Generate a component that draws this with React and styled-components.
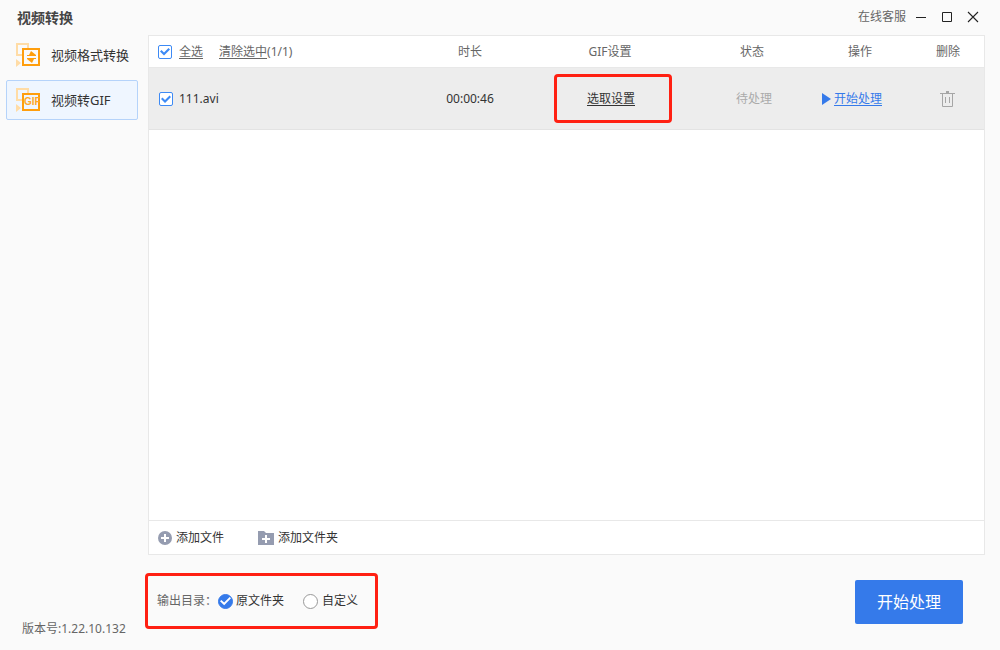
import React, { useState } from 'react'
import styled, { createGlobalStyle } from 'styled-components'

const GlobalStyle = createGlobalStyle`
    * {
        box-sizing: border-box;
    }

    body {
        margin: 0;
        background: #fafafa;
        color: #333;
        font: 12px/16px "Noto Sans", "Noto Sans CJK SC", sans-serif;
    }

    button, input {
        font: inherit;
        color: inherit;
        margin: 0;
    }

    svg {
        flex: none;
    }
`

const Window = styled.div`
    display: flex;
    flex-direction: column;
    min-height: 100vh;
`

const TitleBar = styled.header`
    display: flex;
    align-items: center;
    justify-content: space-between;
    height: 35px;
    padding: 0 17px;
`

const Title = styled.h1`
    margin: 0;
    font-size: 14px;
    line-height: 20px;
    font-weight: 700;
    color: #444;
`

const WindowControls = styled.div`
    display: flex;
    align-items: center;
    gap: 6px;
    height: 34px;
    margin-bottom: 1px;
`

const PlainButton = styled.button`
    display: inline-flex;
    align-items: center;
    padding: 0;
    border: none;
    background: none;
    vertical-align: middle;
    cursor: pointer;
`

const WindowButton = styled(PlainButton)`
    justify-content: center;
    width: 20px;
    height: 20px;
`

const SupportLink = styled.a`
    margin-right: -1px;
    color: #666;
    text-decoration: none;
`

const Body = styled.div`
    display: flex;
    flex: 1;
`

const Sidebar = styled.aside`
    display: flex;
    flex-direction: column;
    justify-content: space-between;
    width: 145px;
    padding: 0 7px 13px 6px;
`

const Nav = styled.nav`
    display: flex;
    flex-direction: column;
    gap: 5px;
`

const NavItem = styled.button`
    display: flex;
    align-items: center;
    gap: 11px;
    height: 40px;
    padding: 0 0 0 9px;
    border: 1px solid ${props => props.$active ? '#b5d3fa' : 'transparent'};
    border-radius: 2px;
    background: ${props => props.$active ? '#eff6ff' : 'transparent'};
    font-size: 13px;
    line-height: 20px;
    white-space: nowrap;
    cursor: pointer;
`

const Version = styled.div`
    padding-left: 16px;
    color: #666;
`

const Main = styled.main`
    display: flex;
    flex: 1;
    flex-direction: column;
    padding-right: 15px;
`

const Panel = styled.section`
    display: flex;
    flex: 1;
    flex-direction: column;
    margin-left: 3px;
    border: 1px solid #e8e8e8;
    background: #fff;
`

const Table = styled.table`
    width: 100%;
    border-collapse: separate;
    border-spacing: 0;
    table-layout: fixed;
`

const HeadCell = styled.th`
    width: ${props => props.$width || 'auto'};
    height: 32px;
    padding: 0 0 0 ${props => props.$indent || '0'};
    border-bottom: 1px solid #e8e8e8;
    color: #666;
    font-weight: 400;
    text-align: ${props => props.$align || 'center'};
`

const Cell = styled.td`
    height: 62px;
    padding: 0 0 0 ${props => props.$indent || '0'};
    border-bottom: 1px solid #e3e3e3;
    background: #ededed;
    color: ${props => props.$muted ? '#aaa' : '#333'};
    text-align: ${props => props.$align || 'center'};
`

const Inline = styled.div`
    display: flex;
    align-items: center;
    gap: ${props => props.$gap || '6px'};
`

const CheckLabel = styled.label`
    display: inline-flex;
    align-items: center;
    gap: ${props => props.$gap || '6px'};
    text-decoration: ${props => props.$underline ? 'underline' : 'none'};
    text-underline-offset: 2px;
    vertical-align: middle;
    cursor: pointer;
`

const Checkbox = styled.input.attrs({ type: 'checkbox' })`
    appearance: none;
    display: grid;
    place-items: center;
    width: 14px;
    height: 14px;
    border: 1px solid #3d8af5;
    border-radius: 2px;
    background: #fff;

    &:checked::after {
        content: '';
        width: 10px;
        height: 10px;
        background: #3d8af5;
        clip-path: polygon(0 50%, 15% 35%, 40% 60%, 85% 15%, 100% 30%, 40% 90%);
    }
`

const Radio = styled.input.attrs({ type: 'radio' })`
    appearance: none;
    display: grid;
    place-items: center;
    width: 15px;
    height: 15px;
    border: 1px solid #999;
    border-radius: 50%;
    background: #fff;

    &:checked {
        border-color: #357aea;
        background: #357aea;
    }

    &:checked::after {
        content: '';
        width: 11px;
        height: 11px;
        background: #fff;
        clip-path: polygon(0 52%, 12% 40%, 38% 64%, 88% 14%, 100% 26%, 38% 88%);
    }
`

const TextLink = styled.a`
    color: ${props => props.$color || 'inherit'};
    text-decoration: underline;
    text-underline-offset: 2px;
`

const Marked = styled.div`
    border: 3px solid #ff2012;
    border-radius: 4px;
`

const SettingsMark = styled(Marked)`
    display: inline-flex;
    align-items: center;
    justify-content: center;
    width: 118px;
    height: 49px;
    padding-right: 4px;
    vertical-align: middle;
`

const StartLink = styled(TextLink)`
    display: inline-flex;
    align-items: center;
    gap: 3px;
    vertical-align: middle;
`

const PanelFooter = styled.div`
    display: flex;
    align-items: center;
    gap: 34px;
    height: 34px;
    margin-top: auto;
    padding-left: 9px;
    border-top: 1px solid #e8e8e8;
`

const AddButton = styled(PlainButton)`
    gap: 4px;
`

const BottomBar = styled.footer`
    display: flex;
    align-items: center;
    justify-content: space-between;
    height: 95px;
    padding: 0 22px 2px 0;
`

const OutputMark = styled(Marked)`
    display: flex;
    align-items: center;
    width: 233px;
    height: 56px;
    margin-bottom: 1px;
    padding-left: 9px;
`

const OutputLabel = styled.span`
    width: 61px;
    color: #666;
    white-space: nowrap;
`

const OutputOptions = styled.div`
    display: flex;
    gap: 19px;
`

const StartButton = styled.button`
    width: 108px;
    height: 44px;
    border: none;
    border-radius: 2px;
    background: #357aea;
    color: #fff;
    font-size: 16px;
    cursor: pointer;
`

const IconBack = () => (
    <g>
        <path d="M1 1h11v11H1z" fill="none" stroke="#ffdca6" strokeWidth="2" />
        <path d="M0 16l5 4-5 4z" fill="#ffdca6" />
    </g>
)

const ConvertIcon = () => (
    <svg width="24" height="24" viewBox="0 0 24 24">
        <IconBack />
        <path d="M7 6h16v16H7z" fill="#fafafa" stroke="#ff9e0d" strokeWidth="2" />
        <path d="M11 12h2l2-4 5 4v1h-9zM11 15h9v1h-2l-2 4-5-4z" fill="#ff9e0d" />
    </svg>
)

const GifIcon = () => (
    <svg width="24" height="24" viewBox="0 0 24 24">
        <IconBack />
        <path d="M7 6h16v16H7z" fill="#eff6ff" stroke="#ff9e0d" strokeWidth="2" />
        <text x="8" y="17" fontSize="10" fontWeight="700" fontFamily="Liberation Sans, sans-serif" fill="#ffa726">GIF</text>
    </svg>
)

const MinimizeIcon = () => (
    <svg width="12" height="12" viewBox="0 0 12 12">
        <path d="M1 6.500h10" stroke="#222" />
    </svg>
)

const MaximizeIcon = () => (
    <svg width="12" height="12" viewBox="0 0 12 12">
        <path d="M1.500 1.500h9v9h-9z" fill="none" stroke="#222" />
    </svg>
)

const CloseIcon = () => (
    <svg width="12" height="12" viewBox="0 0 12 12">
        <path d="M1 1l10 10M11 1L1 11" stroke="#222" strokeWidth="1.100" />
    </svg>
)

const PlayIcon = () => (
    <svg width="9" height="12" viewBox="0 0 9 12">
        <path d="M0 0l9 6-9 6z" fill="#357aea" />
    </svg>
)

const TrashIcon = () => (
    <svg width="15" height="16" viewBox="0 0 15 16">
        <path d="M0 2.500h15M2.500 3v12.500h10V3M5.500 6v6M9.500 6v6" fill="none" stroke="#a6a6a6" />
        <path d="M6 0h3v2H6z" fill="#a6a6a6" />
    </svg>
)

const AddFileIcon = () => (
    <svg width="14" height="14" viewBox="0 0 14 14">
        <circle cx="7" cy="7" r="7" fill="#959cb0" />
        <path d="M3 7h8M7 3v8" stroke="#fff" strokeWidth="2" />
    </svg>
)

const AddFolderIcon = () => (
    <svg width="16" height="14" viewBox="0 0 16 14">
        <path d="M0 0h6l2 2h8v12H0z" fill="#959cb0" />
        <path d="M4 8h8M8 4v8" stroke="#fff" strokeWidth="2" />
    </svg>
)

const navItems = [
    { id: 'format', text: '视频格式转换', Icon: ConvertIcon },
    { id: 'gif', text: '视频转GIF', Icon: GifIcon },
]

const FileRow = ({ file, onToggle }) => (
    <tr>
        <Cell $align="left" $indent="10px">
            <CheckLabel>
                <Checkbox checked={file.checked} onChange={onToggle} />
                {file.name}
            </CheckLabel>
        </Cell>
        <Cell>{file.duration}</Cell>
        <Cell $indent="6px">
            <SettingsMark>
                <TextLink href="#settings">选取设置</TextLink>
            </SettingsMark>
        </Cell>
        <Cell $muted $indent="28px">待处理</Cell>
        <Cell>
            <StartLink href="#start" $color="#357aea">
                <PlayIcon />
                开始处理
            </StartLink>
        </Cell>
        <Cell $indent="6px">
            <PlainButton aria-label="删除">
                <TrashIcon />
            </PlainButton>
        </Cell>
    </tr>
)

const App = () => {
    const [page, setPage] = useState('gif')
    const [checked, setChecked] = useState(true)
    const [output, setOutput] = useState('source')
    const file = { name: '111.avi', duration: '00:00:46', checked }
    const toggle = () => setChecked(!checked)

    return (
        <Window>
            <GlobalStyle />
            <TitleBar>
                <Title>视频转换</Title>
                <WindowControls>
                    <SupportLink href="#support">在线客服</SupportLink>
                    <WindowButton aria-label="最小化"><MinimizeIcon /></WindowButton>
                    <WindowButton aria-label="最大化"><MaximizeIcon /></WindowButton>
                    <WindowButton aria-label="关闭"><CloseIcon /></WindowButton>
                </WindowControls>
            </TitleBar>
            <Body>
                <Sidebar>
                    <Nav>
                        {navItems.map(({ id, text, Icon }) => (
                            <NavItem key={id} $active={page === id} onClick={() => setPage(id)}>
                                <Icon />
                                {text}
                            </NavItem>
                        ))}
                    </Nav>
                    <Version>版本号:1.22.10.132</Version>
                </Sidebar>
                <Main>
                    <Panel>
                        <Table>
                            <thead>
                                <tr>
                                    <HeadCell $align="left" $indent="9px">
                                        <Inline $gap="16px">
                                            <CheckLabel $underline $gap="7px">
                                                <Checkbox checked={checked} onChange={toggle} />
                                                全选
                                            </CheckLabel>
                                            <span>
                                                <TextLink href="#clear">清除选中</TextLink>
                                                ({checked ? 1 : 0}/1)
                                            </span>
                                        </Inline>
                                    </HeadCell>
                                    <HeadCell $width="140px">时长</HeadCell>
                                    <HeadCell $width="140px">GIF设置</HeadCell>
                                    <HeadCell $width="120px" $indent="24px">状态</HeadCell>
                                    <HeadCell $width="104px" $indent="16px">操作</HeadCell>
                                    <HeadCell $width="80px" $indent="8px">删除</HeadCell>
                                </tr>
                            </thead>
                            <tbody>
                                <FileRow file={file} onToggle={toggle} />
                            </tbody>
                        </Table>
                        <PanelFooter>
                            <AddButton><AddFileIcon />添加文件</AddButton>
                            <AddButton><AddFolderIcon />添加文件夹</AddButton>
                        </PanelFooter>
                    </Panel>
                    <BottomBar>
                        <OutputMark role="radiogroup" aria-labelledby="output-label">
                            <OutputLabel id="output-label">输出目录：</OutputLabel>
                            <OutputOptions>
                                <CheckLabel $gap="3px">
                                    <Radio name="output" checked={output === 'source'} onChange={() => setOutput('source')} />
                                    原文件夹
                                </CheckLabel>
                                <CheckLabel $gap="4px">
                                    <Radio name="output" checked={output === 'custom'} onChange={() => setOutput('custom')} />
                                    自定义
                                </CheckLabel>
                            </OutputOptions>
                        </OutputMark>
                        <StartButton>开始处理</StartButton>
                    </BottomBar>
                </Main>
            </Body>
        </Window>
    )
}

export default App
